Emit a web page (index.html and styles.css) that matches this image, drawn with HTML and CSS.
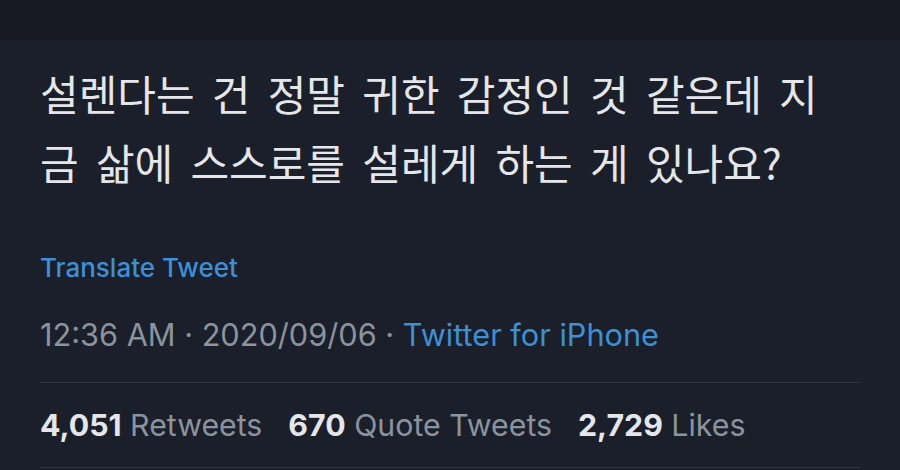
FILE: index.html
```html
<!DOCTYPE html>
<html lang="ko">
<head>
    <meta charset="UTF-8">
    <title>Tweet</title>
    <link rel="stylesheet" href="styles.css">
</head>
<body>
    <div class="topbar"></div>
    <div class="tweet">
        <p class="text">설렌다는 건 정말 귀한 감정인 것 같은데 지<br>금 삶에 스스로를 설레게 하는 게 있나요?</p>
        <a class="translate">Translate Tweet</a>
        <div class="meta">12:36 AM · 2020/09/06 · <a class="source">Twitter for iPhone</a></div>
        <div class="stats">
            <span><b>4,051</b> Retweets</span>
            <span><b>670</b> Quote Tweets</span>
            <span><b>2,729</b> Likes</span>
        </div>
    </div>
</body>
</html>
```

FILE: styles.css
```css
body {
    margin: 0;
    background-color: #1a1f2a;
    font-family: Inter, Roboto, "Noto Sans CJK KR", sans-serif;
    color: #8b939e;
}

.topbar {
    height: 40px;
    background-color: #171a22;
}

.tweet {
    margin: 0 40px 0 38px;
    padding-left: 2px;
}

.text {
    margin: 18px 0 0;
    font-family: "Noto Sans CJK KR", sans-serif;
    font-size: 42px;
    line-height: 69px;
    word-spacing: 5.5px;
    color: #e4e6ea;
}

.translate {
    display: block;
    margin-top: 56px;
    font-size: 26px;
    line-height: 32px;
    font-weight: 500;
    color: #3d8fd6;
}

.meta {
    margin-top: 33px;
    padding-bottom: 29px;
    font-size: 30.7px;
    line-height: 36px;
    border-bottom: 1px solid #303742;
}

.source {
    color: #3d8fd6;
}

.stats {
    display: flex;
    gap: 26px;
    padding: 24px 0 24px;
    font-size: 30.3px;
    line-height: 36px;
    border-bottom: 1px solid #303742;
}

.stats b {
    color: #e4e6ea;
    font-weight: 700;
}
```
